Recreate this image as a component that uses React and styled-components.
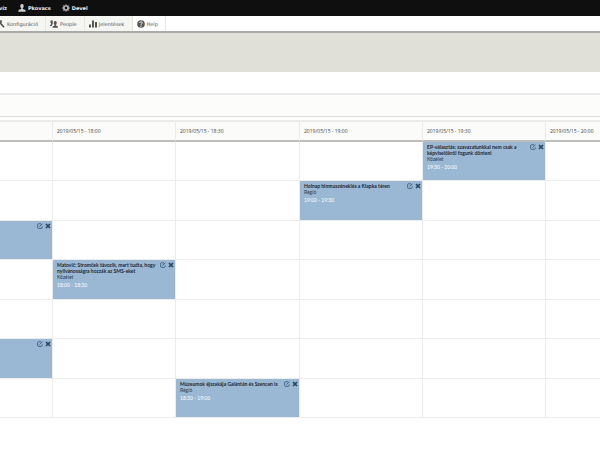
// src/App.jsx
import React from 'react';
import styled, { createGlobalStyle } from 'styled-components';

const slots = ['2019/05/15 - 18:00', '2019/05/15 - 18:30', '2019/05/15 - 19:00', '2019/05/15 - 19:30', '2019/05/15 - 20:00'];

// col: 0 is the slot that is scrolled half out of view
const rows = [
  { col: 4, title: 'EP-választás: szavazatunkkal nem csak a képviselőkről fogunk dönteni', category: 'Közélet', time: '19:30 - 20:00' },
  { col: 3, title: 'Holnap himnuszéneklés a Klapka téren', category: 'Régió', time: '19:00 - 19:30' },
  { col: 0 },
  { col: 1, title: 'Matovič: Stromček távozik, mert tudta, hogy nyilvánosságra hozzák az SMS-eket', category: 'Közélet', time: '18:00 - 18:30' },
  {},
  { col: 0 },
  { col: 2, title: 'Múzeumok éjszakája Galántán és Szencen is', category: 'Régió', time: '18:30 - 19:00' },
];

const UserIcon = () => (
  <svg width="8" height="8" viewBox="0 0 16 16" fill="#ccc" aria-hidden="true">
    <path d="M8 0C5.6 0 4.4 1.8 4.6 4.3C4.7 6.2 5.6 7.6 6.4 8.6V10L2 11.6C1 12 .6 13 .6 15.5H15.4C15.4 13 15 12 14 11.6L9.6 10V8.6C10.4 7.6 11.3 6.2 11.4 4.3C11.6 1.8 10.4 0 8 0Z" />
  </svg>
);

const GearIcon = () => (
  <svg width="8" height="8" viewBox="0 0 16 16" fill="none" stroke="#ccc" aria-hidden="true">
    <circle cx="8" cy="8" r="4" strokeWidth="2.4" />
    <path d="M8 .8V3.6M8 12.4V15.2M.8 8H3.6M12.4 8H15.2M2.9 2.9L4.9 4.9M11.1 11.1L13.1 13.1M2.9 13.1L4.9 11.1M11.1 4.9L13.1 2.9" strokeWidth="2.6" />
  </svg>
);

const WrenchIcon = () => (
  <svg width="8" height="8" viewBox="0 0 16 16" fill="none" stroke="#555" aria-hidden="true">
    <path d="M3 .5V4.5L5.5 6L8 4.5V.5M6 5.5L14 14.5" strokeWidth="3.4" />
  </svg>
);

const PeopleIcon = () => (
  <svg width="8" height="8" viewBox="0 0 16 16" fill="#555" aria-hidden="true">
    <path d="M1 1H5.5V8L3.5 10.5L4.5 12H0V10L2 9V6H1Z" />
    <path d="M10.5 2C8.4 2 7.4 3.6 7.6 5.8C7.7 7.6 8.4 8.9 9.2 9.8V11L6 12.4C5.2 12.8 5 13.6 5 15.6H16C16 13.6 15.8 12.8 15 12.4L11.8 11V9.8C12.6 8.9 13.3 7.6 13.4 5.8C13.6 3.6 12.6 2 10.5 2Z" />
  </svg>
);

const ChartIcon = () => (
  <svg width="8" height="8" viewBox="0 0 16 16" fill="#555" aria-hidden="true">
    <path d="M0 9H4V15H0ZM6 1H10V15H6ZM12 4H16V15H12Z" />
  </svg>
);

const HelpIcon = () => (
  <svg width="8" height="8" viewBox="0 0 16 16" aria-hidden="true">
    <circle cx="8" cy="8" r="7.6" fill="#555" />
    <path d="M5.4 6C5.4 2.6 10.8 2.8 10.6 6C10.5 7.8 8 7.6 8 10" fill="none" stroke="#fff" strokeWidth="2" />
    <circle cx="8" cy="12.4" r="1.3" fill="#fff" />
  </svg>
);

const EditIcon = () => (
  <svg width="6" height="6" viewBox="0 0 12 12" fill="none" stroke="#315777" aria-hidden="true">
    <path d="M8 1.5H3C2 1.5 1.2 2.2 1.2 3.2V9C1.2 10 2 10.8 3 10.8H8.6C9.6 10.8 10.4 10 10.4 9V6.5" strokeWidth="1.6" />
    <path d="M5 7.2L11 1.2" strokeWidth="1.8" />
  </svg>
);

const CloseIcon = () => (
  <svg width="6" height="6" viewBox="0 0 12 12" stroke="#254766" aria-hidden="true">
    <path d="M2 2L10 10M10 2L2 10" strokeWidth="3.4" />
  </svg>
);

function EventCard({ title, category, time }) {
  return (
    <Card>
      <CardText>
        {title && <CardTitle>{title}</CardTitle>}
        {category && <Category>{category}</Category>}
        {time && <Time>{time}</Time>}
      </CardText>
      <Actions>
        <IconButton type="button" aria-label="Edit"><EditIcon /></IconButton>
        <IconButton type="button" aria-label="Delete"><CloseIcon /></IconButton>
      </Actions>
    </Card>
  );
}

function App() {
  return (
    <>
      <GlobalStyle />
      <AdminBar>
        <BarLink href="#">víz</BarLink>
        <BarLink href="#"><UserIcon />Pkovacs</BarLink>
        <BarLink href="#"><GearIcon />Devel</BarLink>
      </AdminBar>
      <Tray>
        <TrayLink href="#"><WrenchIcon />Konfiguráció</TrayLink>
        <TrayLink href="#"><PeopleIcon />People</TrayLink>
        <TrayLink href="#"><ChartIcon />Jelentések</TrayLink>
        <TrayLink href="#" $light><HelpIcon />Help</TrayLink>
      </Tray>
      <PageHeader />
      <main>
        <FilterPanel />
        <Schedule>
          <colgroup>
            <Column $width="53px" />
            <Column $width="123px" />
            <Column $width="124px" />
            <Column $width="123px" />
            <Column $width="123px" />
            <Column />
          </colgroup>
          <thead>
            <tr>
              <SlotHead />
              {slots.map(slot => <SlotHead key={slot}>{slot}</SlotHead>)}
            </tr>
          </thead>
          <tbody>
            {rows.map((row, i) => (
              <tr key={i}>
                {[0, 1, 2, 3, 4, 5].map(col => (
                  <Slot key={col}>{row.col === col && <EventCard {...row} />}</Slot>
                ))}
              </tr>
            ))}
          </tbody>
        </Schedule>
      </main>
    </>
  );
}

const GlobalStyle = createGlobalStyle`
  * { box-sizing: border-box; }
  body {
    margin: 0; background: #fff; color: #444; overflow-x: hidden;
    font-family: 'Open Sans', 'Noto Sans', sans-serif; font-size: 5px; line-height: 6px;
  }
  svg { display: block; flex: none; }
`;

const AdminBar = styled.nav`
  display: flex; gap: 11px; height: 16px; margin-left: -1px;
  background: #0f0f0f;
  font-family: 'DejaVu Sans', sans-serif;
`;

const BarLink = styled.a`
  display: flex; align-items: center; gap: 2px;
  color: #eee; font-weight: 700; text-decoration: none;
`;

const Tray = styled.nav`
  display: flex; height: 17px;
  background: #fff; border-bottom: 2px solid #a9a9a7;
  font-family: 'DejaVu Sans', sans-serif;
`;

const TrayLink = styled.a`
  display: flex; align-items: center; gap: 2px;
  padding: 0 7px 0 4px;
  border-right: 1px solid #e6e6e3;
  background: ${props => props.$light ? '#fff' : '#f5f5f2'};
  color: #555; text-decoration: none;
  &:first-child { margin-left: -7px; }
`;

const PageHeader = styled.header`
  height: 39px; background: #e0e0d8;
`;

const FilterPanel = styled.section`
  height: 24px; margin: 21px 0 3px;
  background: #fcfcfa;
  border-top: 2px solid #ebebea; border-bottom: 1px solid #dededd;
`;

const Schedule = styled.table`
  width: 100%; height: 298px;
  table-layout: fixed; border-collapse: separate; border-spacing: 0;
`;

const Column = styled.col`
  width: ${props => props.$width || 'auto'};
`;

const SlotHead = styled.th`
  height: 22px; padding: 0 4px;
  background: #fbfbf9; color: #444; font-weight: 400; text-align: left; white-space: nowrap;
  border-top: 2px solid #ebebea; border-right: 1px solid #ececec; border-bottom: 2px solid #bdbdbb;
  &:last-child { border-right: 0; }
`;

const Slot = styled.td`
  height: 39px; padding: 0; vertical-align: top;
  border-right: 1px solid #ececec; border-bottom: 1px solid #ececec;
  &:last-child { border-right: 0; }
`;

const Card = styled.article`
  display: flex; justify-content: space-between;
  height: 100%; padding: 2px 1px 0 4px;
  background: #9ab8d3;
  font-family: Lato, 'Open Sans', sans-serif;
`;

const CardText = styled.div`flex: 1; min-width: 0;`;

const CardTitle = styled.h3`
  margin: 0; font-size: 5px; font-weight: 700; line-height: 6px; color: #1c2731;
`;

const Category = styled.div`color: #303d49;`;

const Time = styled.div`margin-top: 2px; color: #fff;`;

const Actions = styled.div`
  display: flex; align-items: flex-start; gap: 2px; flex: none;
`;

const IconButton = styled.button`
  padding: 0; border: 0; background: none; cursor: pointer;
`;

export default App;
